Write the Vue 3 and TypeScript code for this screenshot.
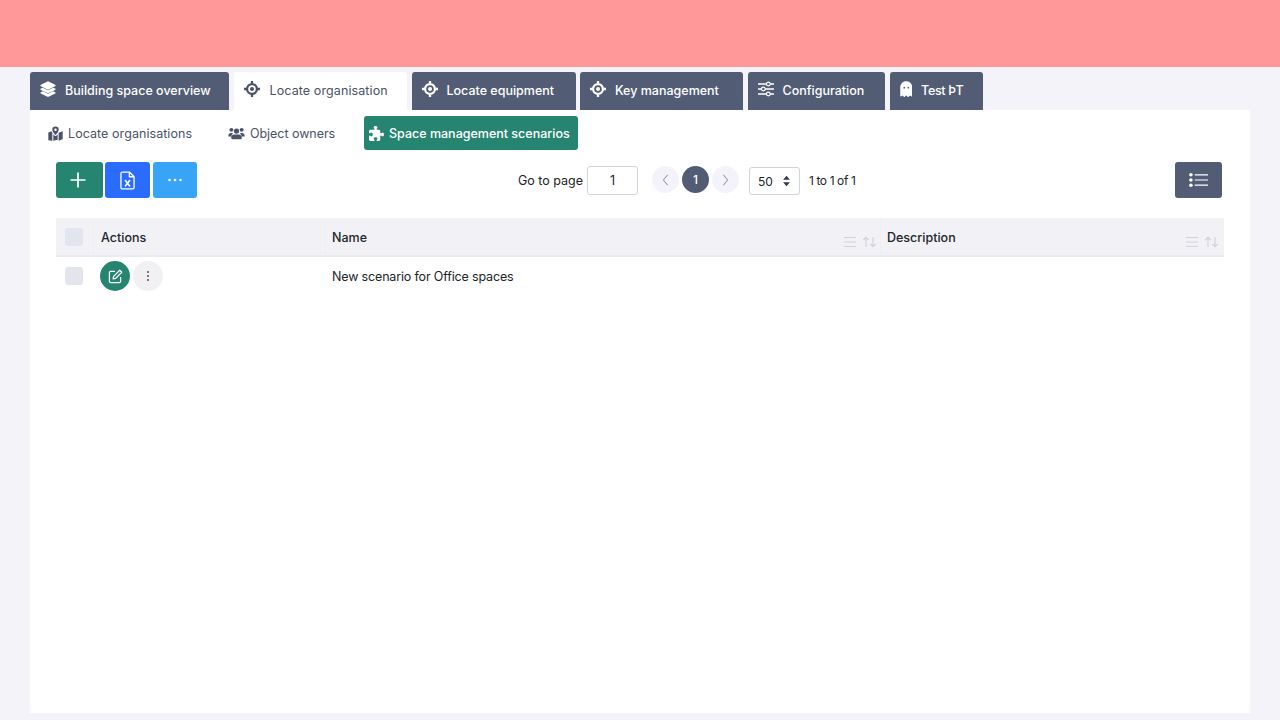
<template>
  <div class="page">
    <header class="topbar" />
    <main class="content">
      <nav class="tabs">
        <a v-for="t in tabs" :key="t.label" class="tab" :class="[{ 'tab--active': t.active }, `tab--${t.icon}`]">
          <svg v-if="t.icon === 'ghost'" class="tab-icon tab-icon--ghost" viewBox="3 0 18 24" aria-hidden="true">
            <path class="fill" d="M12 .5C6.600.5 3 4.600 3 10v12.200c0 .9 1 1.300 1.600.7l1.600-1.300 2.200 2.100c.4.400 1 .4 1.400 0L12 21.700l2.200 2c.4.400 1 .4 1.400 0l2.200-2.100 1.600 1.300c.6.600 1.600.2 1.600-.7V10C21 4.600 17.400.5 12 .5z" />
            <circle class="eye" cx="9" cy="10" r="1.300" />
            <circle class="eye" cx="15" cy="10" r="1.300" />
          </svg>
          <svg v-else class="tab-icon" viewBox="0 0 24 24" aria-hidden="true">
            <template v-if="t.icon === 'layers'">
              <path class="fill" d="M12 .5 1.300 5.800c-.9.400-.9 1.700 0 2.100L12 13l10.700-5.100c.9-.4.9-1.700 0-2.100z" />
              <path class="fill" d="M4.300 10 1.300 11.300c-.9.400-.9 1.700 0 2.100L12 18.500l10.700-5.100c.9-.4.9-1.700 0-2.100l-3-1.300L12 13.700z" />
              <path class="fill" d="M4.300 15.500 1.300 16.800c-.9.400-.9 1.700 0 2.100L12 24l10.700-5.100c.9-.4.900-1.700 0-2.100l-3-1.300L12 19.200z" />
            </template>
            <template v-else-if="t.icon === 'target'">
              <circle class="line" cx="12" cy="12" r="7.400" stroke-width="3.400" />
              <circle class="fill" cx="12" cy="12" r="3" />
              <path class="line" stroke-width="3.400" d="M12 0v4M12 20v4M0 12h4M20 12h4" />
            </template>
            <template v-else>
              <path class="line" stroke-width="2.400" d="M0 4.500h24M0 12h24M0 19.500h24" />
              <circle class="knob" cx="15.500" cy="4.500" r="2.800" />
              <circle class="knob" cx="8" cy="12" r="2.800" />
              <circle class="knob" cx="15.500" cy="19.500" r="2.800" />
            </template>
          </svg>
          <span>{{ t.label }}</span>
        </a>
      </nav>

      <section class="panel">
        <nav class="subtabs">
          <a class="subtab subtab--orgs">
            <svg class="sub-icon" viewBox="0 0 24 24" aria-hidden="true">
              <path d="M12 .8a5.200 5.200 0 0 0-5.200 5.200c0 2.400 3.300 6.400 4.500 7.800.4.400 1 .4 1.400 0 1.200-1.400 4.500-5.400 4.500-7.800A5.200 5.200 0 0 0 12 .8zm0 7.200a2 2 0 1 1 0-4 2 2 0 0 1 0 4z" />
              <path d="M.5 10.300 5.600 8.400c.3.800.8 1.700 1.300 2.500V23.500L.8 22.800c-.2 0-.3-.1-.3-.3zM8.500 13.200c.6.800 1.300 1.600 1.700 2 .9 1 2.700 1 3.600 0 .4-.4 1.100-1.200 1.700-2V22l-7 1.500zM17 10.900l6.500-2.600v12.500c0 .2-.1.300-.3.400L17 23.500z" />
            </svg>
            <span>Locate organisations</span>
          </a>
          <a class="subtab subtab--owners">
            <svg class="sub-icon sub-icon--wide" viewBox="0 0 28 24" aria-hidden="true">
              <circle cx="5.500" cy="6" r="3.200" />
              <circle cx="22.500" cy="6" r="3.200" />
              <circle cx="14" cy="8" r="4.400" />
              <path d="M.5 16c0-2.700 1.700-5 4-5h2c.8 0 1.500.3 2.100.8-1.800 1.100-3 2.900-3.300 5.200H1.500c-.6 0-1-.4-1-1zM27.500 16c0 .6-.4 1-1 1h-3.800c-.3-2.300-1.500-4.100-3.300-5.200.6-.5 1.300-.8 2.100-.8h2c2.300 0 4 2.300 4 5zM10 13.500h8c2.800 0 4.700 2.300 4.700 5v1.500c0 .8-.7 1.500-1.500 1.500H6.800c-.8 0-1.500-.7-1.500-1.500v-1.500c0-2.700 1.900-5 4.700-5z" />
            </svg>
            <span>Object owners</span>
          </a>
          <a class="subtab subtab--active">
            <svg class="sub-icon" viewBox="0 0 512 512" aria-hidden="true">
              <path d="M192 104.800c0-9.200-5.800-17.300-13.200-22.800C167.200 73.300 160 61.300 160 48c0-26.500 28.700-48 64-48s64 21.500 64 48c0 13.300-7.200 25.300-18.800 34c-7.400 5.500-13.200 13.600-13.200 22.800c0 12.800 10.400 23.200 23.200 23.200H336c26.500 0 48 21.500 48 48v56.800c0 12.800 10.400 23.200 23.200 23.200c9.200 0 17.300-5.800 22.800-13.200c8.700-11.600 20.700-18.800 34-18.800c26.500 0 48 28.700 48 64s-21.500 64-48 64c-13.300 0-25.300-7.200-34-18.800c-5.500-7.400-13.600-13.200-22.800-13.200c-12.800 0-23.200 10.400-23.200 23.200V464c0 26.500-21.500 48-48 48H279.200c-12.800 0-23.200-10.400-23.200-23.200c0-9.200 5.800-17.300 13.200-22.800c11.600-8.700 18.800-20.700 18.800-34c0-26.500-28.700-48-64-48s-64 21.500-64 48c0 13.300 7.200 25.300 18.800 34c7.400 5.500 13.200 13.600 13.200 22.800c0 12.800-10.400 23.200-23.200 23.200H48c-26.500 0-48-21.500-48-48V343.200C0 330.400 10.400 320 23.200 320c9.200 0 17.300 5.800 22.800 13.200C54.700 344.800 66.700 352 80 352c26.500 0 48-28.700 48-64s-21.500-64-48-64c-13.300 0-25.300 7.200-34 18.800C40.500 250.200 32.400 256 23.200 256C10.400 256 0 245.600 0 232.800V176c0-26.500 21.500-48 48-48H168.800c12.800 0 23.200-10.400 23.200-23.200z" />
            </svg>
            <span>Space management scenarios</span>
          </a>
        </nav>

        <div class="toolbar">
          <button class="btn btn--add" type="button" aria-label="Add">
            <svg viewBox="0 0 16 16" width="16" height="16"><path d="M8 .5v15M.5 8h15" stroke="#fff" stroke-width="1.700" fill="none" /></svg>
          </button>
          <button class="btn btn--excel" type="button" aria-label="Export">
            <svg viewBox="0 0 16 20" width="15" height="19">
              <path d="M2.500 1h7.500l5 5v11.500a1.500 1.500 0 0 1-1.500 1.500h-11A1.500 1.500 0 0 1 1 17.500v-15A1.500 1.500 0 0 1 2.500 1z M10 1v5h5" fill="none" stroke="#fff" stroke-width="1.400" stroke-linejoin="round" />
              <path d="M5.300 9.500l5.400 7M10.700 9.500l-5.400 7" stroke="#fff" stroke-width="1.700" fill="none" />
            </svg>
          </button>
          <button class="btn btn--more" type="button" aria-label="More">
            <svg viewBox="0 0 16 4" width="16" height="4"><circle cx="2.500" cy="2" r="1.300" fill="#fff" /><circle cx="8" cy="2" r="1.300" fill="#fff" /><circle cx="13.500" cy="2" r="1.300" fill="#fff" /></svg>
          </button>

          <div class="pager">
            <label class="pager-label">Go to page</label>
            <input class="pager-input" type="text" value="1" />
            <span class="page-round page-round--prev">
              <svg viewBox="0 0 8 14" width="7" height="12"><path d="M6.500 1 1.500 7l5 6" fill="none" stroke="#9aa0ae" stroke-width="1.200" /></svg>
            </span>
            <span class="page-round page-round--current">1</span>
            <span class="page-round">
              <svg viewBox="0 0 8 14" width="7" height="12"><path d="M1.500 1l5 6-5 6" fill="none" stroke="#9aa0ae" stroke-width="1.200" /></svg>
            </span>
            <div class="size-select">
              <span>50</span>
              <svg viewBox="0 0 10 14" width="9" height="12"><path d="M5 1 9 5.500H1zM5 13 1 8.500h8z" fill="#333a48" /></svg>
            </div>
            <span class="pager-count">1 to 1 of 1</span>
          </div>

          <button class="btn btn--list" type="button" aria-label="Columns">
            <svg viewBox="0 0 20 16" width="19" height="16">
              <g fill="#fff">
                <circle cx="2" cy="2.500" r="1.900" />
                <circle cx="2" cy="8" r="1.900" />
                <circle cx="2" cy="13.500" r="1.900" />
              </g>
              <path d="M6 2.500h14M6 8h14M6 13.500h14" stroke="#fff" stroke-width="1.300" />
            </svg>
          </button>
        </div>

        <div class="grid">
          <div class="grid-head">
            <div class="cell cell--check"><span class="checkbox" /></div>
            <div class="cell cell--title cell--action-title">Actions</div>
            <div class="cell cell--title cell--tools">
              Name
              <svg class="sort" viewBox="0 0 34 12" aria-hidden="true">
                <path d="M1 1.500h12M1 6h12M1 10.500h12" />
                <path d="M23 11V1.500M20.300 4 23 1.300 25.700 4M30 1v9.500M27.300 8 30 10.700 32.700 8" />
              </svg>
            </div>
            <div class="cell cell--title cell--tools cell--last">
              Description
              <svg class="sort" viewBox="0 0 34 12" aria-hidden="true">
                <path d="M1 1.500h12M1 6h12M1 10.500h12" />
                <path d="M23 11V1.500M20.300 4 23 1.300 25.700 4M30 1v9.500M27.300 8 30 10.700 32.700 8" />
              </svg>
            </div>
          </div>
          <div v-for="r in rows" :key="r.name" class="grid-row">
            <div class="cell cell--check"><span class="checkbox" /></div>
            <div class="cell cell--actions">
              <button class="round round--edit" type="button" aria-label="Edit">
                <svg viewBox="0 0 16 16" width="15" height="15">
                  <path d="M7.500 2.500H3A1.500 1.500 0 0 0 1.500 4v9A1.500 1.500 0 0 0 3 14.500h9a1.500 1.500 0 0 0 1.500-1.500V8.500" fill="none" stroke="#fff" stroke-width="1.300" />
                  <path d="M12.500 1.300 14.700 3.500 8.200 10l-2.800.6.600-2.800z" fill="none" stroke="#fff" stroke-width="1.300" stroke-linejoin="round" />
                </svg>
              </button>
              <button class="round round--menu" type="button" aria-label="Menu">
                <svg viewBox="0 0 4 12" width="4" height="12"><g fill="#6d3f4a"><circle cx="2" cy="2" r="1" /><circle cx="2" cy="6" r="1" /><circle cx="2" cy="10" r="1" /></g></svg>
              </button>
            </div>
            <div class="cell cell--name">{{ r.name }}</div>
            <div class="cell">{{ r.description }}</div>
          </div>
        </div>
      </section>
    </main>
  </div>
</template>

<script setup lang="ts">
  interface Tab {
    label: string
    icon: 'layers' | 'target' | 'sliders' | 'ghost'
    active?: boolean
  }

  const tabs: Tab[] = [
    { label: 'Building space overview', icon: 'layers' },
    { label: 'Locate organisation', icon: 'target', active: true },
    { label: 'Locate equipment', icon: 'target' },
    { label: 'Key management', icon: 'target' },
    { label: 'Configuration', icon: 'sliders' },
    { label: 'Test ÞT', icon: 'ghost' }
  ]

  const rows = [{ name: 'New scenario for Office spaces', description: '' }]
</script>

<style>
  html,
  body {
    margin: 0;
    background: #f3f3f9;
  }
</style>

<style scoped>
  .page {
    min-height: 720px;
    background: #f3f3f9;
    font-family: Inter, 'Open Sans', sans-serif;
    font-size: 12.5px;
    color: #212529;
    overflow: hidden;
  }

  .topbar {
    height: 67px;
    background: #ff9999;
  }

  .content {
    padding: 5px 30px 7px;
  }

  .tabs {
    display: grid;
    grid-template-columns: 199px 173.5px 164px 163px 137.5px 93.5px;
    column-gap: 4.5px;
    height: 38px;
  }

  .tab {
    display: flex;
    align-items: center;
    padding: 0 10px 2px;
    gap: 9px;
    background: #525c74;
    border-radius: 3px 3px 0 0;
    color: #fff;
    font-weight: 500;
    white-space: nowrap;
    box-sizing: border-box;
  }

  .tab--active {
    padding-left: 10px;
    gap: 10px;
    background: #fff;
    color: #495267;
    font-weight: 400;
    letter-spacing: 0.1px;
  }

  .tab--ghost {
    letter-spacing: -0.3px;
  }

  .tab-icon {
    width: 16px;
    height: 16px;
    flex: none;
    margin-top: -2px;
  }

  .tab-icon--ghost {
    width: 12.5px;
    height: 16px;
  }

  .tab-icon .fill {
    fill: #fff;
  }

  .tab-icon .line {
    fill: none;
    stroke: #fff;
  }

  .tab-icon .knob {
    fill: #525c74;
    stroke: #fff;
    stroke-width: 1.800;
  }

  .tab-icon .eye {
    fill: #525c74;
  }

  .tab--active .tab-icon .fill {
    fill: #495267;
  }

  .tab--active .tab-icon .line {
    stroke: #495267;
  }

  .panel {
    height: 603px;
    box-sizing: border-box;
    background: #fff;
    padding: 6px 26px 0;
  }

  .subtabs {
    display: flex;
    align-items: center;
    height: 34px;
    margin-left: -8px;
  }

  .subtab {
    display: flex;
    align-items: center;
    gap: 5px;
    height: 34px;
    box-sizing: border-box;
    color: #495267;
    white-space: nowrap;
  }

  .subtab--orgs {
    width: 180px;
    letter-spacing: 0.06px;
  }

  .subtab--owners {
    width: 136px;
    letter-spacing: -0.05px;
  }

  .subtab--active {
    width: 214px;
    padding-left: 5px;
    background: #268571;
    border-radius: 3px;
    color: #fff;
    font-weight: 500;
  }

  .sub-icon {
    width: 15px;
    height: 15px;
    flex: none;
    fill: currentColor;
  }

  .sub-icon--wide {
    width: 17px;
  }

  .toolbar {
    display: flex;
    align-items: center;
    height: 36px;
    margin-top: 12px;
    padding-right: 2px;
  }

  .btn {
    display: flex;
    align-items: center;
    justify-content: center;
    height: 36px;
    padding: 0;
    border: 0;
    border-radius: 3px;
  }

  .btn--add {
    width: 47px;
    margin-right: 2px;
    padding-right: 3px;
    background: #268571;
  }

  .btn--excel {
    width: 45px;
    margin-right: 3px;
    background: #2a6cff;
  }

  .btn--more {
    width: 44px;
    background: #38a4f8;
  }

  .btn--list {
    width: 47px;
    margin-left: auto;
    background: #525c74;
  }

  .pager {
    display: flex;
    align-items: center;
    margin-left: 321px;
  }

  .pager-label {
    width: 69px;
    white-space: nowrap;
  }

  .pager-input {
    width: 51px;
    height: 29px;
    box-sizing: border-box;
    padding: 0;
    border: 1px solid #ced4da;
    border-radius: 3px;
    background: #fff;
    color: #212529;
    font: inherit;
    text-align: center;
    outline: none;
  }

  .page-round {
    display: flex;
    align-items: center;
    justify-content: center;
    width: 27px;
    height: 27px;
    margin: 0 0 1px 3px;
    border-radius: 50%;
    background: #f3f3f9;
  }

  .page-round--prev {
    margin-left: 14px;
  }

  .page-round--current {
    background: #525c74;
    color: #fff;
    font-weight: 500;
    font-size: 12px;
  }

  .size-select {
    display: flex;
    align-items: center;
    justify-content: space-between;
    width: 51px;
    height: 28px;
    box-sizing: border-box;
    margin: 2px 0 0 10px;
    padding: 0 8px 0 8px;
    border: 1px solid #ced4da;
    border-radius: 3px;
    font-size: 12px;
  }

  .pager-count {
    margin-left: 9px;
    white-space: nowrap;
    font-size: 12px;
    letter-spacing: -0.4px;
  }

  .grid {
    margin-top: 20px;
    width: 1168px;
  }

  .grid-head,
  .grid-row {
    display: grid;
    grid-template-columns: 38px 232px 555px 343px;
  }

  .grid-head {
    height: 39px;
    box-sizing: border-box;
    background: #f2f2f6;
    border-bottom: 2px solid #e9ebf0;
  }

  .grid-row {
    height: 38px;
  }

  .cell {
    display: flex;
    align-items: center;
    padding: 0 6px;
    min-width: 0;
  }

  .grid-head .cell {
    border-right: 1px solid #eeeef3;
  }

  .grid-head .cell--last {
    border-right: 0;
  }

  .cell--check {
    justify-content: center;
    padding: 0 2px 0 0;
  }

  .cell--title {
    position: relative;
    padding-top: 1px;
    font-weight: 500;
  }

  .cell--action-title {
    padding-left: 7px;
  }

  .cell--name {
    letter-spacing: -0.16px;
  }

  .sort {
    position: absolute;
    right: 3px;
    bottom: 7px;
    width: 34px;
    height: 12px;
    fill: none;
    stroke: #d0d2d8;
    stroke-width: 1.100;
  }

  .cell--last .sort {
    right: 5px;
  }

  .checkbox {
    display: block;
    width: 18px;
    height: 18px;
    border-radius: 3px;
    background: #e2e5ee;
  }

  .cell--actions {
    gap: 3px;
    padding-left: 6px;
  }

  .round {
    display: flex;
    align-items: center;
    justify-content: center;
    flex: none;
    width: 30px;
    height: 30px;
    padding: 0;
    border: 0;
    border-radius: 50%;
  }

  .round--edit {
    background: #268571;
  }

  .round--menu {
    background: #f1f1f3;
  }
</style>
